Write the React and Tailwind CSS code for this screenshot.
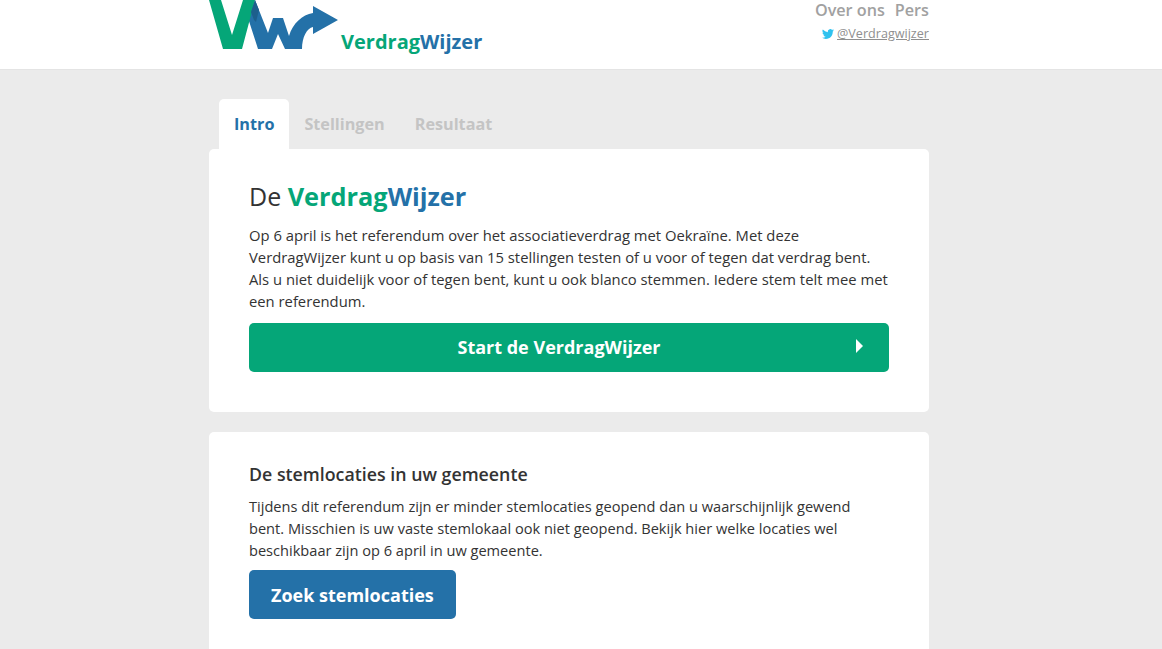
const font = { fontFamily: '"Open Sans", sans-serif' }

const Logo = () => (
  <svg width="130" height="50" viewBox="0 0 130 50" className="shrink-0">
    <path d="M46 0L59 33L64 18H74L80 36C84 23 93 15 104 13V6L129 20L104 34V27C98 28 93 37 93 49H76L69 34L63 49H49L39 18Z" fill="#2471a8" />
    <path d="M0 0H12L23 35L34 0H46L33 49H14Z" fill="#05a678" />
    <path d="M42 12L46 0L50 10L47 22L45 20Z" fill="#1d5f8c" />
  </svg>
)

const Tab = ({ label, active }) => (
  <div className={active
    ? 'h-[50px] px-[15px] pt-[15px] bg-white rounded-t-[5px] text-[#2471a8] text-[16.2px] font-bold leading-[20px]'
    : 'h-[50px] px-[15px] pt-[15px] text-[#c4c4c4] text-[16.2px] font-bold leading-[20px]'}>
    {label}
  </div>
)

export default function App() {
  return (
    <div style={font} className="h-[649px] overflow-hidden bg-[#ebebeb] text-[#333] pr-[24px]">
      <div className="h-[70px] bg-white border-b border-[#e4e4e4] -mr-[24px] pr-[24px]">
        <header className="w-[720px] mx-auto flex justify-between">
          <div className="flex">
            <Logo />
            <div className="ml-[2px] mt-[30px] text-xl font-bold leading-[24px]">
              <span className="text-[#05a678]">Verdrag</span>
              <span className="text-[#2471a8]">Wijzer</span>
            </div>
          </div>
          <div className="flex flex-col items-end">
            <div className="flex gap-[10px] text-[16.2px] font-semibold leading-[20px] text-[#a1a1a1]">
              <span>Over ons</span>
              <span>Pers</span>
            </div>
            <div className="mt-[5px] flex items-center gap-[3px] text-[12.6px] leading-[18px] text-[#8f8f8f]">
              <svg width="12" height="12" viewBox="0 0 24 24" fill="#2fc2ef">
                <path d="M24 4.6a9.8 9.8 0 0 1-2.8.8 4.9 4.9 0 0 0 2.1-2.7 9.8 9.8 0 0 1-3.1 1.2 4.9 4.9 0 0 0-8.4 4.5A14 14 0 0 1 1.7 3.2a4.9 4.9 0 0 0 1.5 6.6 4.900 4.900 0 0 1-2.200-.6v.1a4.900 4.900 0 0 0 3.900 4.800 4.900 4.900 0 0 1-2.200.1 4.900 4.900 0 0 0 4.600 3.400A9.900 9.900 0 0 1 0 19.600 13.900 13.900 0 0 0 7.500 21.800c9.100 0 14-7.500 14-14v-.6A10 10 0 0 0 24 4.600Z" />
              </svg>
              <span className="underline">@Verdragwijzer</span>
            </div>
          </div>
        </header>
      </div>

      <main className="w-[720px] mx-auto pt-[29px]">
        <nav className="flex pl-[10px]">
          <Tab label="Intro" active />
          <Tab label="Stellingen" />
          <Tab label="Resultaat" />
        </nav>

        <section className="bg-white rounded-[5px] p-[40px] pt-[30px]">
          <h1 className="text-[25px] font-normal leading-[34px] text-[#333]">
            De <span className="text-[25.3px] font-bold text-[#05a678]">Verdrag</span>
            <span className="text-[25.3px] font-bold text-[#2471a8]">Wijzer</span>
          </h1>
          <p className="mt-[11px] text-[14.8px] leading-[22px]">
            Op 6 april is het referendum over het associatieverdrag met Oekraïne. Met deze VerdragWijzer kunt u op basis van 15 stellingen testen of u voor of tegen dat verdrag bent. Als u niet duidelijk voor of tegen bent, kunt u ook blanco stemmen. Iedere stem telt mee met een referendum.
          </p>
          <button className="relative mt-[11px] w-full h-[49px] pr-[20px] pb-[2px] bg-[#05a678] rounded-[5px] text-white text-lg font-bold">
            Start de VerdragWijzer
            <svg width="7" height="14" viewBox="0 0 7 14" fill="#fff" className="absolute right-[26px] top-[16px]">
              <path d="M0 0L7 7L0 14Z" />
            </svg>
          </button>
        </section>

        <section className="mt-[20px] bg-white rounded-[5px] px-[40px] pt-[29px] pb-[40px]">
          <h2 className="text-[17.8px] font-semibold leading-[26px]">De stemlocaties in uw gemeente</h2>
          <p className="mt-[8px] max-w-[630px] text-[14.6px] leading-[22px]">
            Tijdens dit referendum zijn er minder stemlocaties geopend dan u waarschijnlijk gewend bent. Misschien is uw vaste stemlokaal ook niet geopend. Bekijk hier welke locaties wel beschikbaar zijn op 6 april in uw gemeente.
          </p>
          <button className="mt-[9px] h-[49px] px-[22px] bg-[#2471a8] rounded-[5px] text-white text-lg font-bold">
            Zoek stemlocaties
          </button>
        </section>
      </main>
    </div>
  )
}
